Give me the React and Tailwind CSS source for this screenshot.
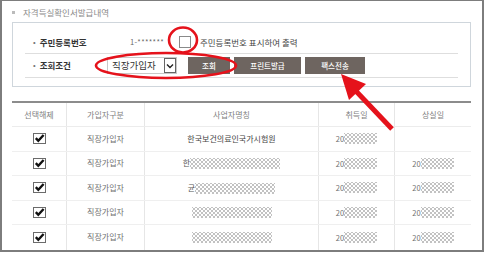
import React from "react";

function Mask({ w = 34 }) {
  return (
    <svg width={w} height="11" className="inline-block align-middle">
      <defs>
        <pattern id="hatch" width="4" height="4" patternUnits="userSpaceOnUse">
          <path d="M0 0L4 4M4 0L0 4" stroke="#a8a8a8" strokeWidth="0.7" />
        </pattern>
      </defs>
      <rect width={w} height="11" fill="url(#hatch)" />
    </svg>
  );
}

function CheckIcon() {
  return (
    <svg width="13" height="11" viewBox="0 0 13 11" className="inline-block">
      <rect x="0.5" y="0.5" width="12" height="10" fill="#fff" stroke="#6b6b6b" />
      <path d="M2.8 5.2 L5.3 7.8 L10.6 2" fill="none" stroke="#111" strokeWidth="2.4" />
    </svg>
  );
}

const rows = [
  { name: <span className="text-[#444]">한국보건의료인국가시험원</span>, start: true, end: false },
  { name: <span>한<Mask w={90} /></span>, start: true, end: true },
  { name: <span>균<Mask w={80} /></span>, start: true, end: true },
  { name: <Mask w={80} />, start: true, end: true },
  { name: <Mask w={80} />, start: true, end: true },
];

export default function App() {
  return (
    <div className="relative w-[485px] h-[255px] bg-white font-['Noto_Sans_CJK_KR',sans-serif] text-[#555]">
      <div className="w-[484px] h-[252px] border-x-2 border-b-2 border-t border-[#7d7d7d] pl-[10px] pr-[10px]">
        {/* title */}
        <div className="flex items-center h-[12px] mt-[5px] gap-[5px]">
          <span className="w-[3px] h-[3px] bg-[#bbb]" />
          <span className="text-[8.5px] leading-none text-[#8a8a8a] ml-[3px]">자격득실확인서발급내역</span>
        </div>

        {/* search box */}
        <div className="mt-[4px] w-[459px] h-[65px] border border-[#cfd6dc] pt-[8px] px-[12px]">
          <div className="flex h-[23px] border-b border-[#dedede] items-center">
            <div className="w-[77px] flex items-center pl-[8px] gap-[4px] text-[8.5px] font-semibold text-[#333]">
              <span className="text-[7px] text-[#777]">•</span>
              <span>주민등록번호</span>
            </div>
            <span className="ml-[28px] text-[7.5px] text-[#666] tracking-[0.3px]">1-*******</span>
            <span className="ml-[15px] w-[12px] h-[12px] border border-[#8a8a8a] bg-white" />
            <span className="ml-[9px] text-[8.5px] text-[#444]">주민등록번호 표시하여 출력</span>
          </div>
          <div className="flex h-[24px] border-b border-[#dedede] items-center">
            <div className="w-[77px] flex items-center pl-[8px] gap-[4px] text-[8.5px] font-semibold text-[#333]">
              <span className="text-[7px] text-[#777]">•</span>
              <span>조회조건</span>
            </div>
            <div className="ml-[5px] flex items-center h-[17px] w-[70px] border border-[#c8c8c8] bg-white">
              <span className="flex-1 pl-[4px] text-[9.5px] leading-none text-[#333]">직장가입자</span>
              <span className="w-[12px] h-[15px] border border-[#666] flex items-center justify-center">
                <svg width="8" height="6" viewBox="0 0 8 6">
                  <path d="M1 1.5 L4 4.5 L7 1.5" fill="none" stroke="#222" strokeWidth="1.4" />
                </svg>
              </span>
            </div>
            <div className="ml-[11px] flex gap-[4px]">
              <button className="w-[42px] h-[17px] bg-[#6e6560] text-white text-[7.5px] font-medium leading-none">조회</button>
              <button className="w-[67px] h-[17px] bg-[#6e6560] text-white text-[7.5px] font-medium leading-none">프린트발급</button>
              <button className="w-[60px] h-[17px] bg-[#6e6560] text-white text-[7.5px] font-medium leading-none">팩스전송</button>
            </div>
          </div>
        </div>

        {/* table */}
        <div className="mt-[14px] w-[459px] border-t-2 border-[#8c8c8c]">
          <div className="grid grid-cols-[55px_78px_174px_76px_76px] h-[24px] border-b border-[#ececec] text-[8px] text-[#808080] items-stretch">
            <div className="flex items-center justify-center border-r border-[#e6e6e6]">선택해제</div>
            <div className="flex items-center justify-center border-r border-[#e6e6e6]">가입자구분</div>
            <div className="flex items-center justify-center border-r border-[#e6e6e6]">사업자명칭</div>
            <div className="flex items-center justify-center border-r border-[#e6e6e6]">취득일</div>
            <div className="flex items-center justify-center">상실일</div>
          </div>
          {rows.map((r, i) => (
            <div
              key={i}
              className="grid grid-cols-[55px_78px_174px_76px_76px] h-[24.5px] border-b border-[#efefef] last:border-b-0 text-[8px] text-[#707070] items-stretch"
            >
              <div className="flex items-center justify-center border-r border-[#e6e6e6]">
                <CheckIcon />
              </div>
              <div className="flex items-center justify-center border-r border-[#e6e6e6]">직장가입자</div>
              <div className="flex items-center justify-center border-r border-[#e6e6e6] text-[#555]">{r.name}</div>
              <div className="flex items-center justify-center border-r border-[#e6e6e6] text-[7.5px]">
                {r.start && (
                  <span className="flex items-center">
                    20
                    <Mask w={33} />
                  </span>
                )}
              </div>
              <div className="flex items-center justify-center text-[7.5px]">
                {r.end && (
                  <span className="flex items-center">
                    20
                    <Mask w={33} />
                  </span>
                )}
              </div>
            </div>
          ))}
        </div>
      </div>

      {/* red annotations */}
      <svg className="absolute top-0 left-0 pointer-events-none" width="485" height="255">
        <ellipse cx="183" cy="40" rx="14" ry="12.5" fill="none" stroke="#e5121b" strokeWidth="2.6" />
        <ellipse cx="166" cy="65.5" rx="70" ry="12.5" fill="none" stroke="#e5121b" strokeWidth="2.6" />
        <line x1="392" y1="129" x2="354" y2="89" stroke="#e5121b" strokeWidth="5" />
        <polygon points="341,74 366,84 349,100" fill="#e5121b" />
      </svg>
    </div>
  );
}
